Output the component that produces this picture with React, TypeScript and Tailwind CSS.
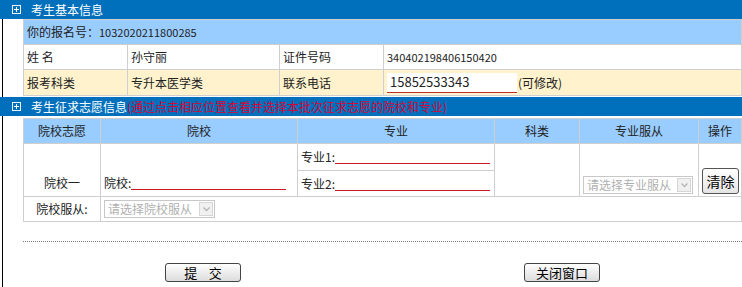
import React from 'react';

const cjk = { fontFamily: '"Noto Sans CJK SC", "Liberation Sans", sans-serif' };

const BoxIcon = () => (
  <svg width="9" height="9" viewBox="0 0 9 9" className="shrink-0">
    <rect x="0.5" y="0.5" width="8" height="8" fill="none" stroke="#e8f0f8" strokeWidth="1" />
    <path d="M2 4.5h5M4.5 2v5" stroke="#ffffff" strokeWidth="1" />
  </svg>
);

const SectionHeader: React.FC<{ title: string; note?: string }> = ({ title, note }) => (
  <div className="h-[19px] bg-[#0070bc] flex items-center pl-[12px] text-[12px] leading-none text-white">
    <BoxIcon />
    <span className="ml-[10px]">{title}</span>
    {note && <span className="text-[#d0083a]">{note}</span>}
  </div>
);

const FakeSelect: React.FC<{ label: string; width: string }> = ({ label, width }) => (
  <div className={`${width} h-[18px] border border-[#c8c8c8] bg-white flex items-center text-[12px] text-[#b0b0b0]`}>
    <span className="flex-1 pl-[3px] whitespace-nowrap overflow-hidden">{label}</span>
    <span className="w-[14px] h-[14px] mr-[1px] border border-[#d6d6d6] bg-[#f0f0f0] flex items-center justify-center">
      <svg width="7" height="5" viewBox="0 0 7 5">
        <path d="M0.5 0.5L3.5 3.5L6.5 0.5" fill="none" stroke="#b5b5b5" strokeWidth="1.3" />
      </svg>
    </span>
  </div>
);

// label followed by a red underlined blank, the page's text input
const Blank: React.FC<{ label: string; width: string }> = ({ label, width }) => (
  <div className="flex items-end">
    <span>{label}</span>
    <span className={`${width} h-px mb-[2px] bg-[#d01828]`} />
  </div>
);

const OldButton: React.FC<{ children: React.ReactNode }> = ({ children }) => (
  <button className="w-[76px] h-[19px] rounded-[3px] border border-[#444] bg-gradient-to-b from-white to-[#dcdcdc] text-[13px] leading-none text-black flex items-center justify-center">
    {children}
  </button>
);

export default function App() {
  const cell = 'border border-[#cfcfcf] px-[3px] text-[12px] text-[#222]';
  const th = 'border border-[#cfcfcf] text-[12px] font-normal text-[#222] text-center';

  return (
    <div className="w-[742px] h-[287px] bg-white overflow-hidden" style={cjk}>
      {/* 考生基本信息 */}
      <SectionHeader title="考生基本信息" />
      <div className="ml-[2px] border-l border-black pl-[20px] pb-[1px]">
        <table className="w-[719px] table-fixed border-collapse">
          <colgroup>
            <col className="w-[104px]" />
            <col className="w-[152px]" />
            <col className="w-[104px]" />
            <col />
          </colgroup>
          <tbody>
            <tr className="h-[25px] bg-[#99ccff]">
              <td colSpan={4} className={cell}>
                你的报名号：<span className="text-[11px]">1032020211800285</span>
              </td>
            </tr>
            <tr className="h-[25px] bg-white">
              <td className={cell}>姓 名</td>
              <td className={cell}>孙守丽</td>
              <td className={cell}>证件号码</td>
              <td className={cell}>
                <span className="text-[11px]">340402198406150420</span>
              </td>
            </tr>
            <tr className="h-[26px] bg-[#fff2cc]">
              <td className={cell}>报考科类</td>
              <td className={cell}>专升本医学类</td>
              <td className={cell}>联系电话</td>
              <td className={cell}>
                <div className="flex items-center">
                  <span className="w-[130px] h-[20px] bg-white border-b border-[#c0302a] pl-[3px] flex items-center text-[13px]">
                    15852533343
                  </span>
                  <span className="ml-[1px]">(可修改)</span>
                </div>
              </td>
            </tr>
          </tbody>
        </table>
      </div>

      {/* 考生征求志愿信息 */}
      <SectionHeader title="考生征求志愿信息" note="(通过点击相应位置查看并选择本批次征求志愿的院校和专业)" />
      <div className="ml-[2px] border-l border-black pl-[20px] pt-[2px] h-[172px]">
        <table className="w-[719px] table-fixed border-collapse">
          <colgroup>
            <col className="w-[77px]" />
            <col className="w-[197px]" />
            <col className="w-[197px]" />
            <col className="w-[85px]" />
            <col className="w-[119px]" />
            <col />
          </colgroup>
          <thead>
            <tr className="h-[25px] bg-[#99ccff]">
              <th className={th}>院校志愿</th>
              <th className={th}>院校</th>
              <th className={th}>专业</th>
              <th className={th}>科类</th>
              <th className={th}>专业服从</th>
              <th className={th}>操作</th>
            </tr>
          </thead>
          <tbody>
            <tr className="h-[27px]">
              <td rowSpan={2} className={`${cell} text-center align-bottom pb-[4px]`}>院校一</td>
              <td rowSpan={2} className={`${cell} align-bottom pb-[4px]`}>
                <Blank label="院校:" width="w-[155px]" />
              </td>
              <td className={cell}>
                <Blank label="专业1:" width="w-[155px]" />
              </td>
              <td rowSpan={2} className={cell}></td>
              <td rowSpan={2} className={`${cell} align-bottom pb-[2px] px-[1px]`}>
                <FakeSelect label="请选择专业服从" width="w-[110px]" />
              </td>
              <td rowSpan={2} className={`${cell} align-bottom pb-[2px] px-[3px]`}>
                <button className="w-[37px] h-[26px] rounded-[3px] border border-[#555] bg-gradient-to-b from-white to-[#e4e4e4] text-[14px] leading-none text-black">
                  清除
                </button>
              </td>
            </tr>
            <tr className="h-[26px]">
              <td className={cell}>
                <Blank label="专业2:" width="w-[155px]" />
              </td>
            </tr>
            <tr className="h-[25px]">
              <td className={`${cell} text-center`}>院校服从:</td>
              <td colSpan={5} className={`${cell} py-0`}>
                <FakeSelect label="请选择院校服从" width="w-[111px]" />
              </td>
            </tr>
          </tbody>
        </table>

        <div className="mt-[19px] border-t border-dotted border-[#777]" />

        <div className="mt-[21px] flex">
          <div className="ml-[142px]">
            <OldButton>提&nbsp;&nbsp;&nbsp;&nbsp;交</OldButton>
          </div>
          <div className="ml-[283px]">
            <OldButton>关闭窗口</OldButton>
          </div>
        </div>
      </div>
    </div>
  );
}
